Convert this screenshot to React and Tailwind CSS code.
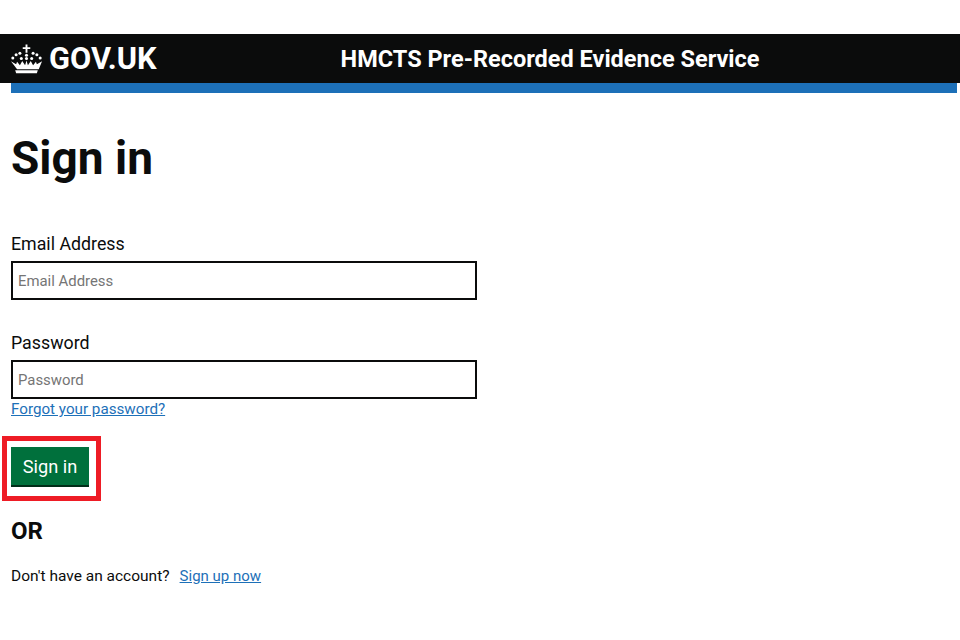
const font = { fontFamily: 'Roboto,"Liberation Sans",sans-serif' };

function Crown() {
  const dots = [[3,14.500],[6.500,11],[10.500,9.500],[24.500,9.500],[28.500,11],[32,14.500],[12,15],[23,15],[17.500,11.500],[17.500,15]];
  return (
    <svg width="33" height="30" viewBox="0 0 35 31" fill="#fff" className="shrink-0 -ml-px">
      <path d="M16.500 0h2v3h3v2h-3v4h-2v-4h-3v-2h3z" />
      {dots.map(([x, y]) => <circle key={`${x}-${y}`} cx={x} cy={y} r="1.600" />)}
      <path d="M1 18l5.500 3 1-2.500 3 3.500 2.500-4.500 3 4.500 1.500-5 1.500 5 3-4.500 2.500 4.500 3-3.500 1 2.500 5.500-3-3.500 8.500h-23z" />
      <path d="M5.500 27.500h24l-1 3h-22z" />
    </svg>
  );
}

function Field({ label, className = "" }) {
  return (
    <div className={`flex flex-col ${className}`}>
      <label className="text-[17.800px] leading-[24px] text-[#0b0c0c] mb-[5px]">{label}</label>
      <input
        placeholder={label}
        className="w-[466px] h-[39px] border-2 border-[#0b0c0c] px-[5px] text-[14.900px] outline-none placeholder:text-[#757575]"
      />
    </div>
  );
}

export default function App() {
  return (
    <div className="w-[960px] h-[640px] bg-white overflow-hidden pt-[34px]" style={font}>
      <header className="h-[49px] bg-[#0b0c0c] flex items-center pl-[11px]">
        <Crown />
        <span className="ml-[6px] mt-[2px] text-white font-bold text-[30.800px] leading-none">GOV.UK</span>
        <span className="ml-[184px] mt-[2px] text-white font-bold text-[23.500px] leading-none">HMCTS Pre-Recorded Evidence Service</span>
      </header>
      <div className="h-[10px] ml-[11px] mr-[3px] bg-[#1d70b8]" />
      <main className="pl-[11px]">
        <h1 className="mt-[36px] text-[46px] leading-[58px] font-bold text-[#0b0c0c]">Sign in</h1>
        <Field label="Email Address" className="mt-[45px]" />
        <Field label="Password" className="mt-[31px]" />
        <a href="#" className="block mt-px text-[15.200px] leading-[18px] text-[#1d70b8] underline">Forgot your password?</a>
        <div className="-ml-[9px] mt-[18px] w-[99px] h-[65px] border-[5px] border-[#ee1c25] pl-[4px] pt-[6px]">
          <button className="w-[78px] h-[38px] pt-[1px] bg-[#00703c] text-white text-[18.200px] shadow-[0_2px_0_#002d18]">Sign in</button>
        </div>
        <h2 className="mt-[14px] text-[24px] leading-[32px] font-bold text-[#0b0c0c]">OR</h2>
        <p className="mt-[19px] text-[15.500px] leading-[20px] text-[#0b0c0c]">
          Don't have an account?
          <a href="#" className="ml-[10px] text-[15px] text-[#1d70b8] underline">Sign up now</a>
        </p>
      </main>
    </div>
  );
}
